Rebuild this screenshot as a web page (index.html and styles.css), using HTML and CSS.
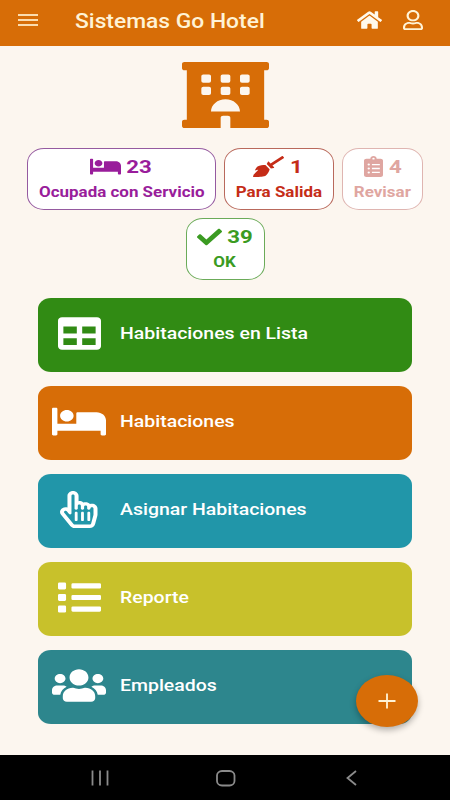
FILE: index.html
```html
<!DOCTYPE html>
<html lang="es">

<head>
  <meta charset="UTF-8">
  <meta name="viewport" content="width=device-width, initial-scale=1.0">
  <title>Sistemas Go Hotel</title>
  <link rel="stylesheet" href="styles.css">
</head>

<body>
  <svg class="sprite">
    <symbol id="bed" viewBox="0 0 640 512" preserveAspectRatio="none">
      <path d="M176 256c44.11 0 80-35.89 80-80s-35.89-80-80-80-80 35.89-80 80 35.89 80 80 80zm352-128H304c-8.84 0-16 7.16-16 16v144H64V80c0-8.84-7.16-16-16-16H16C7.16 64 0 71.16 0 80v352c0 8.84 7.16 16 16 16h32c8.84 0 16-7.16 16-16v-48h512v48c0 8.84 7.16 16 16 16h32c8.84 0 16-7.16 16-16V240c0-61.86-50.14-112-112-112z"/>
    </symbol>
  </svg>

  <header class="toolbar">
    <button class="menu-button" aria-label="Menu">
      <svg width="20" height="12" viewBox="0 0 20 12">
        <path d="M0 1h20M0 6h20M0 11h20"/>
      </svg>
    </button>
    <h1><span class="wide-left">Sistemas Go Hotel</span></h1>
    <svg class="icon-home" viewBox="0 0 576 512" preserveAspectRatio="none">
      <path d="M280.37 148.26L96 300.11V464a16 16 0 0 0 16 16l112.06-.29a16 16 0 0 0 15.92-16V368a16 16 0 0 1 16-16h64a16 16 0 0 1 16 16v95.64a16 16 0 0 0 16 16.05L464 480a16 16 0 0 0 16-16V300L295.67 148.26a12.19 12.19 0 0 0-15.3 0zM571.6 251.47L488 182.56V44.05a12 12 0 0 0-12-12h-56a12 12 0 0 0-12 12v72.61L318.47 43a48 48 0 0 0-61 0L4.34 251.47a12 12 0 0 0-1.6 16.9l25.5 31A12 12 0 0 0 45.15 301l235.22-193.74a12.19 12.19 0 0 1 15.3 0L530.9 301a12 12 0 0 0 16.9-1.6l25.5-31a12 12 0 0 0-1.7-16.93z"/>
    </svg>
    <svg class="icon-user" viewBox="0 0 448 512" preserveAspectRatio="none">
      <path d="M313.6 304c-28.7 0-42.5 16-89.6 16-47.1 0-60.8-16-89.6-16C60.2 304 0 364.2 0 438.4V464c0 26.5 21.5 48 48 48h352c26.5 0 48-21.5 48-48v-25.6c0-74.2-60.2-134.4-134.4-134.4zM400 464H48v-25.6c0-47.6 38.8-86.4 86.4-86.4 14.6 0 38.3 16 89.6 16 51.7 0 74.9-16 89.6-16 47.6 0 86.4 38.8 86.4 86.4V464zM224 288c79.5 0 144-64.5 144-144S303.5 0 224 0 80 64.5 80 144s64.5 144 144 144zm0-240c52.9 0 96 43.1 96 96s-43.1 96-96 96-96-43.1-96-96 43.1-96 96-96z"/>
    </svg>
  </header>

  <main class="content">
    <svg class="hotel-logo" viewBox="0 0 576 512" preserveAspectRatio="none">
      <path fill-rule="evenodd" d="M560 64c8.84 0 16-7.16 16-16V16c0-8.84-7.16-16-16-16H16C7.16 0 0 7.16 0 16v32c0 8.84 7.16 16 16 16h15.98v384H16c-8.84 0-16 7.16-16 16v32c0 8.84 7.16 16 16 16h240v-80c0-8.8 7.2-16 16-16h32c8.8 0 16 7.2 16 16v80h240c8.84 0 16-7.16 16-16v-32c0-8.84-7.16-16-16-16h-16V64h16z
        M268.800 96h38.4q12.800 0 12.800 12.800v38.4q0 12.800-12.800 12.800h-38.4q-12.800 0-12.800-12.800v-38.4q0-12.800 12.800-12.800z
        m0 96h38.4q12.800 0 12.800 12.800v38.4q0 12.800-12.800 12.800h-38.4q-12.800 0-12.800-12.800v-38.4q0-12.800 12.800-12.800z
        M140.800 96h38.4q12.800 0 12.800 12.800v38.4q0 12.800-12.800 12.800h-38.4q-12.800 0-12.800-12.800v-38.4q0-12.800 12.800-12.800z
        m0 96h38.4q12.800 0 12.800 12.800v38.4q0 12.800-12.800 12.800h-38.4q-12.800 0-12.800-12.800v-38.4q0-12.800 12.800-12.800z
        M396.800 96h38.4q12.800 0 12.800 12.800v38.4q0 12.800-12.800 12.800h-38.4q-12.800 0-12.800-12.800v-38.4q0-12.800 12.800-12.800z
        m0 96h38.4q12.800 0 12.800 12.800v38.4q0 12.800-12.800 12.800h-38.4q-12.800 0-12.800-12.800v-38.4q0-12.800 12.800-12.800z
        M192 384c0-53 43-96 96-96s96 43 96 96z"/>
    </svg>

    <section class="chips">
      <div class="chip ocupada">
        <div class="chip-top">
          <svg class="chip-bed"><use href="#bed"/></svg>
          <span class="count wide">23</span>
        </div>
        <span class="chip-label wide">Ocupada con Servicio</span>
      </div>
      <div class="chip salida">
        <div class="chip-top">
          <svg class="chip-broom" viewBox="0 0 640 512" preserveAspectRatio="none">
            <path d="M256.47 216.77l86.73 109.18s-16.6 102.36-76.57 150.12C206.66 523.85 0 510.19 0 510.19s3.8-23.14 11-55.43l94.62-112.17c3.97-4.7-.87-11.62-6.65-9.5l-60.4 22.09c14.44-41.66 32.72-80.04 54.6-97.47 59.97-47.76 163.3-40.94 163.3-40.94zM636.53 31.03l-19.86-25c-5.49-6.9-15.52-8.05-22.41-2.56l-232.48 177.8-34.14-42.97c-5.09-6.41-15.14-5.21-18.59 2.21l-25.33 54.55 86.73 109.18 58.8-12.45c8-1.69 11.42-11.2 6.34-17.6l-34.09-42.92 232.48-177.8c6.89-5.48 8.04-15.53 2.55-22.44z"/>
          </svg>
          <span class="count wide">1</span>
        </div>
        <span class="chip-label wide">Para Salida</span>
      </div>
      <div class="chip revisar">
        <div class="chip-top">
          <svg class="chip-clipboard" viewBox="0 0 384 512" preserveAspectRatio="none">
            <path fill-rule="evenodd" d="M336 64h-80c0-35.3-28.700-64-64-64s-64 28.700-64 64H48C21.500 64 0 85.500 0 112v352c0 26.500 21.500 48 48 48h288c26.500 0 48-21.500 48-48V112c0-26.500-21.500-48-48-48z
              M96 424a24 24 0 1 1 0-48 24 24 0 0 1 0 48z
              M96 328a24 24 0 1 1 0-48 24 24 0 0 1 0 48z
              M96 232a24 24 0 1 1 0-48 24 24 0 0 1 0 48z
              M192 88a24 24 0 1 1 0-48 24 24 0 0 1 0 48z
              M160 384h160v32H160z M160 288h160v32H160z M160 192h160v32H160z"/>
          </svg>
          <span class="count wide">4</span>
        </div>
        <span class="chip-label wide">Revisar</span>
      </div>
      <div class="chip ok">
        <div class="chip-top">
          <svg class="chip-check" viewBox="0 0 512 512" preserveAspectRatio="none">
            <path d="M173.898 439.404l-166.4-166.4c-9.997-9.997-9.997-26.206 0-36.204l36.203-36.204c9.997-9.998 26.207-9.998 36.204 0L192 312.69 432.095 72.596c9.997-9.997 26.207-9.997 36.204 0l36.203 36.204c9.997 9.997 9.997 26.206 0 36.204l-294.4 294.401c-9.998 9.997-26.207 9.997-36.204-.001z"/>
          </svg>
          <span class="count wide">39</span>
        </div>
        <span class="chip-label wide">OK</span>
      </div>
    </section>

    <nav class="menu">
      <a class="item lista">
        <span class="item-icon">
          <svg class="w-512" viewBox="0 0 512 512" preserveAspectRatio="none">
            <path d="M464 32H48C21.49 32 0 53.49 0 80v352c0 26.51 21.49 48 48 48h416c26.51 0 48-21.49 48-48V80c0-26.51-21.49-48-48-48zM224 416H64v-96h160v96zm0-160H64v-96h160v96zm224 160H288v-96h160v96zm0-160H288v-96h160v96z"/>
          </svg>
        </span>
        <span class="wide-left">Habitaciones en Lista</span>
      </a>
      <a class="item habitaciones">
        <span class="item-icon">
          <svg class="w-640"><use href="#bed"/></svg>
        </span>
        <span class="wide-left">Habitaciones</span>
      </a>
      <a class="item asignar">
        <span class="item-icon">
          <svg class="w-448" viewBox="0 0 448 512" preserveAspectRatio="none">
            <path d="M358.182 179.361c-19.493-24.768-52.679-31.945-79.872-19.098-15.127-15.687-36.182-22.487-56.595-19.629V67c0-36.944-29.736-67-66.286-67S89.143 30.056 89.143 67v161.129c-19.909-7.41-43.272-5.094-62.083 8.872-29.355 21.795-35.793 63.333-14.55 93.152l109.699 154.001C134.632 501.59 154.741 512 176 512h178.286c30.802 0 57.574-21.5 64.557-51.797l27.429-118.999A67.873 67.873 0 0 0 448 326v-84c0-46.844-46.625-79.273-89.818-62.639zM80.985 279.697l27.126 38.079c8.995 12.626 29.031 6.287 29.031-9.283V67c0-25.12 36.571-25.16 36.571 0v175c0 8.836 7.163 16 16 16h6.857c8.837 0 16-7.164 16-16v-35c0-25.12 36.571-25.16 36.571 0v35c0 8.836 7.163 16 16 16H272c8.837 0 16-7.164 16-16v-21c0-25.12 36.571-25.16 36.571 0v21c0 8.836 7.163 16 16 16h6.857c8.837 0 16-7.164 16-16 0-25.121 36.571-25.16 36.571 0v84c0 1.488-.169 2.977-.502 4.423l-27.43 119.001c-1.978 8.582-9.29 14.576-17.782 14.576H176c-5.769 0-11.263-2.878-14.697-7.697l-109.712-154c-14.406-20.223 14.994-42.443 29.394-22.606zM176.143 400v-96c0-8.837 6.268-16 14-16h6c7.732 0 14 7.163 14 16v96c0 8.837-6.268 16-14 16h-6c-7.733 0-14-7.163-14-16zm75.428 0v-96c0-8.837 6.268-16 14-16h6c7.732 0 14 7.163 14 16v96c0 8.837-6.268 16-14 16h-6c-7.732 0-14-7.163-14-16zM327 400v-96c0-8.837 6.268-16 14-16h6c7.732 0 14 7.163 14 16v96c0 8.837-6.268 16-14 16h-6c-7.732 0-14-7.163-14-16z"/>
          </svg>
        </span>
        <span class="wide-left">Asignar Habitaciones</span>
      </a>
      <a class="item reporte">
        <span class="item-icon">
          <svg class="w-512" viewBox="0 0 512 512" preserveAspectRatio="none">
            <path d="M80 368H16a16 16 0 0 0-16 16v64a16 16 0 0 0 16 16h64a16 16 0 0 0 16-16v-64a16 16 0 0 0-16-16zm0-320H16A16 16 0 0 0 0 64v64a16 16 0 0 0 16 16h64a16 16 0 0 0 16-16V64a16 16 0 0 0-16-16zm0 160H16a16 16 0 0 0-16 16v64a16 16 0 0 0 16 16h64a16 16 0 0 0 16-16v-64a16 16 0 0 0-16-16zm416 172H176a16 16 0 0 0-16 16v40a16 16 0 0 0 16 16h320a16 16 0 0 0 16-16v-40a16 16 0 0 0-16-16zm0-320H176a16 16 0 0 0-16 16v40a16 16 0 0 0 16 16h320a16 16 0 0 0 16-16V76a16 16 0 0 0-16-16zm0 160H176a16 16 0 0 0-16 16v40a16 16 0 0 0 16 16h320a16 16 0 0 0 16-16v-40a16 16 0 0 0-16-16z"/>
          </svg>
        </span>
        <span class="wide-left">Reporte</span>
      </a>
      <a class="item empleados">
        <span class="item-icon">
          <svg class="w-640" viewBox="0 0 640 512" preserveAspectRatio="none">
            <path d="M96 224c35.3 0 64-28.7 64-64s-28.7-64-64-64-64 28.7-64 64 28.7 64 64 64zm448 0c35.3 0 64-28.7 64-64s-28.7-64-64-64-64 28.7-64 64 28.7 64 64 64zm32 32h-64c-17.6 0-33.5 7.1-45.1 18.6 40.3 22.1 68.9 62 75.1 109.4h66c17.7 0 32-14.3 32-32v-32c0-35.3-28.7-64-64-64zm-256 0c61.9 0 112-50.1 112-112S381.9 32 320 32 208 82.1 208 144s50.1 112 112 112zm76.8 32h-8.3c-20.8 10-43.9 16-68.5 16s-47.6-6-68.5-16h-8.3C179.6 288 128 339.6 128 403.2V432c0 26.5 21.5 48 48 48h288c26.5 0 48-21.5 48-48v-28.8c0-63.6-51.6-115.2-115.2-115.2zm-223.7-13.4C161.5 263.1 145.6 256 128 256H64c-35.3 0-64 28.7-64 64v32c0 17.7 14.3 32 32 32h65.9c6.3-47.4 34.9-87.3 75.2-109.4z"/>
          </svg>
        </span>
        <span class="wide-left">Empleados</span>
      </a>
    </nav>

    <button class="fab" aria-label="Agregar">
      <svg width="18" height="16" viewBox="0 0 18 16">
        <path d="M9 0.500v15M0.500 8h17"/>
      </svg>
    </button>
  </main>

  <footer class="system-nav">
    <svg width="18" height="16" viewBox="0 0 18 16">
      <path d="M1.500 0.500v15M9 0.500v15M16.500 0.500v15"/>
    </svg>
    <svg width="20" height="17" viewBox="0 0 20 17">
      <rect x="1" y="1" width="17.500" height="14.500" rx="5" ry="4.500"/>
    </svg>
    <svg width="11" height="16" viewBox="0 0 11 16">
      <path d="M10 1L1.500 8l8.500 7"/>
    </svg>
  </footer>
</body>

</html>
```

FILE: styles.css
```css
* {
  margin: 0;
  padding: 0;
  box-sizing: border-box;
}

body {
  display: flex;
  flex-direction: column;
  height: 800px;
  background-color: #fcf6ef;
  font-family: Roboto, "Liberation Sans", sans-serif;
  overflow: hidden;
}

svg {
  display: block;
  flex: none;
  fill: currentColor;
}

button {
  border: none;
  background: none;
}

.sprite {
  position: absolute;
  width: 0;
  height: 0;
}

/* Texto ensanchado */
.wide,
.wide-left {
  display: inline-block;
  white-space: nowrap;
  transform: scaleX(1.17);
}

.wide-left {
  transform-origin: left center;
}

/* Barra superior */
.toolbar {
  display: flex;
  height: 46px;
  padding: 0 27px 6px 18px;
  align-items: center;
  background-color: #d76d07;
  color: #fff3d6;
}

.menu-button {
  width: 20px;
  color: #fbdcae;
}

.menu-button path {
  stroke: currentColor;
  stroke-width: 2;
}

h1 {
  flex: 1;
  margin-left: 37px;
  padding-top: 2px;
  font-size: 19.500px;
  font-weight: 500;
}

.icon-home {
  width: 25px;
  height: 20px;
  margin-right: 21px;
  color: #fff9ec;
}

.icon-user {
  width: 20px;
  height: 20px;
}

.content {
  position: relative;
  flex: 1;
}

.hotel-logo {
  width: 87px;
  height: 66px;
  margin: 16px auto 20px;
  color: #d76d07;
}

/* Estados de las habitaciones */
.chips {
  display: flex;
  flex-wrap: wrap;
  justify-content: center;
  gap: 8px;
}

.chip {
  height: 62px;
  padding-top: 7px;
  background-color: #fff;
  border: 1px solid;
  border-radius: 17px / 15px;
  text-align: center;
}

.chip-top {
  display: flex;
  align-items: center;
  justify-content: center;
  height: 23px;
  padding-right: 3px;
}

.count {
  margin-left: 7px;
  font-size: 19px;
  font-weight: 700;
  line-height: 22px;
  margin-bottom: 1px;
}

.chip-label {
  margin-left: -20px;
  margin-right: -20px;
  font-size: 14.500px;
  font-weight: 700;
  line-height: 28px;
}

.ocupada {
  width: 189px;
  color: #991d9b;
  border-color: #955aa0;
}

.salida {
  width: 110px;
  color: #c52c17;
  border-color: #b9695c;
}

.revisar {
  width: 81px;
  color: #dfa6a1;
  border-color: #dfb5b1;
}

.ok {
  width: 79px;
  color: #3b9b22;
  border-color: #6bab59;
}

.chip-bed {
  width: 31px;
  height: 21px;
  margin-bottom: 2px;
}

.chip-broom {
  width: 31px;
  height: 21px;
  margin-bottom: 3px;
}

.chip-clipboard {
  width: 19px;
  height: 21px;
  margin-bottom: 2px;
}

.revisar .chip-top {
  padding-right: 0;
}

.chip-check {
  width: 25px;
  height: 22px;
  margin-bottom: 2px;
}

/* Menu principal */
.menu {
  display: flex;
  flex-direction: column;
  gap: 14.300px;
  padding: 18px 38px 0;
}

.item {
  display: flex;
  align-items: center;
  height: 73.700px;
  padding-bottom: 3px;
  border-radius: 13px / 11px;
  color: #fff;
  font-size: 17px;
  font-weight: 500;
}

.item .wide-left {
  transform: scaleX(1.145);
}

.item-icon {
  display: flex;
  justify-content: center;
  width: 82px;
}

.w-448 {
  width: 37.500px;
  height: 37px;
}

.w-512 {
  width: 43px;
  height: 37px;
}

.w-640 {
  width: 54px;
  height: 37px;
}

.lista {
  background-color: #318b14;
}

.habitaciones {
  background-color: #d76d07;
}

.asignar {
  background-color: #2196a9;
}

.reporte {
  background-color: #c8c12b;
}

.empleados {
  background-color: #2d868d;
}

.fab {
  position: absolute;
  right: 32px;
  bottom: 28px;
  display: flex;
  align-items: center;
  justify-content: center;
  width: 62px;
  height: 52px;
  border-radius: 50%;
  background-color: #d76d07;
  box-shadow: 0 3px 6px rgba(0, 0, 0, 0.3);
  color: #fff3d6;
}

.fab path {
  fill: none;
  stroke: currentColor;
  stroke-width: 1.800;
}

/* Botones del sistema */
.system-nav {
  display: flex;
  align-items: center;
  height: 45px;
  padding: 1px 93px 0 91px;
  gap: 107px;
  background-color: #000;
  color: #8b8b8b;
}

.system-nav svg {
  fill: none;
  stroke: currentColor;
  stroke-width: 1.800;
}

.system-nav svg:last-child {
  margin-left: auto;
}
```
